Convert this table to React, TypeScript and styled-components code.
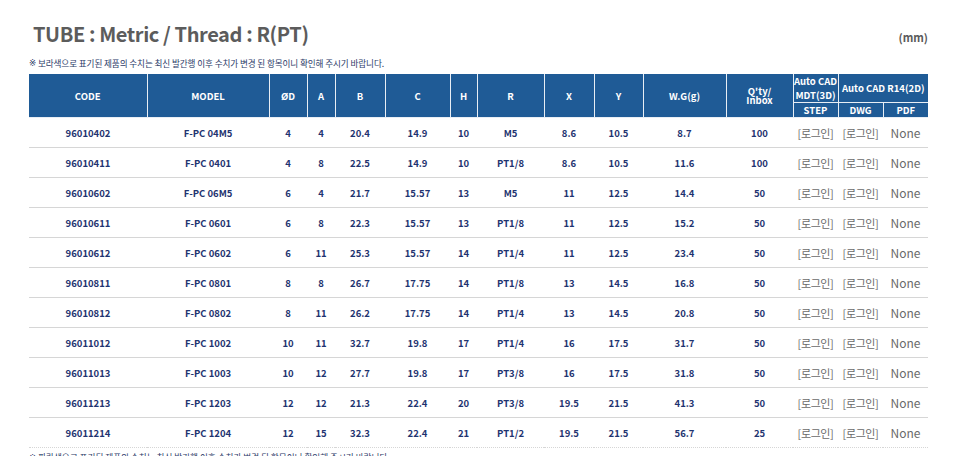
import React from 'react';
import styled, { createGlobalStyle } from 'styled-components';

const GlobalStyle = createGlobalStyle`
  html, body {
    margin: 0;
    padding: 0;
    background: #ffffff;
    font-family: 'Noto Sans CJK KR', 'Noto Sans', sans-serif;
  }
`;

interface Row {
  code: string;
  model: string;
  d: number;
  a: number;
  b: string;
  c: string;
  h: number;
  r: string;
  x: string;
  y: string;
  wg: string;
  qty: number;
}

const rows: Row[] = [
  { code: '96010402', model: 'F-PC 04M5', d: 4, a: 4, b: '20.4', c: '14.9', h: 10, r: 'M5', x: '8.6', y: '10.5', wg: '8.7', qty: 100 },
  { code: '96010411', model: 'F-PC 0401', d: 4, a: 8, b: '22.5', c: '14.9', h: 10, r: 'PT1/8', x: '8.6', y: '10.5', wg: '11.6', qty: 100 },
  { code: '96010602', model: 'F-PC 06M5', d: 6, a: 4, b: '21.7', c: '15.57', h: 13, r: 'M5', x: '11', y: '12.5', wg: '14.4', qty: 50 },
  { code: '96010611', model: 'F-PC 0601', d: 6, a: 8, b: '22.3', c: '15.57', h: 13, r: 'PT1/8', x: '11', y: '12.5', wg: '15.2', qty: 50 },
  { code: '96010612', model: 'F-PC 0602', d: 6, a: 11, b: '25.3', c: '15.57', h: 14, r: 'PT1/4', x: '11', y: '12.5', wg: '23.4', qty: 50 },
  { code: '96010811', model: 'F-PC 0801', d: 8, a: 8, b: '26.7', c: '17.75', h: 14, r: 'PT1/8', x: '13', y: '14.5', wg: '16.8', qty: 50 },
  { code: '96010812', model: 'F-PC 0802', d: 8, a: 11, b: '26.2', c: '17.75', h: 14, r: 'PT1/4', x: '13', y: '14.5', wg: '20.8', qty: 50 },
  { code: '96011012', model: 'F-PC 1002', d: 10, a: 11, b: '32.7', c: '19.8', h: 17, r: 'PT1/4', x: '16', y: '17.5', wg: '31.7', qty: 50 },
  { code: '96011013', model: 'F-PC 1003', d: 10, a: 12, b: '27.7', c: '19.8', h: 17, r: 'PT3/8', x: '16', y: '17.5', wg: '31.8', qty: 50 },
  { code: '96011213', model: 'F-PC 1203', d: 12, a: 12, b: '21.3', c: '22.4', h: 20, r: 'PT3/8', x: '19.5', y: '21.5', wg: '41.3', qty: 50 },
  { code: '96011214', model: 'F-PC 1204', d: 12, a: 15, b: '32.3', c: '22.4', h: 21, r: 'PT1/2', x: '19.5', y: '21.5', wg: '56.7', qty: 25 },
];

// column widths in px, CODE .. PDF
const widths = [118, 122, 38, 28, 50, 65, 27, 67, 50, 49, 83, 67, 45, 45, 45];

const Page = styled.div`
  width: 955px;
  height: 456px;
  overflow: hidden;
  padding: 0 27px 0 29px;
  box-sizing: border-box;
`;

const TitleBar = styled.div`
  display: flex;
  align-items: flex-end;
  justify-content: space-between;
  height: 50px;
`;

const Title = styled.h2`
  margin: 0 0 6px 4px;
  font-size: 20px;
  font-weight: 600;
  color: #5c5c5c;
  line-height: 1;
  letter-spacing: -0.4px;
`;

const Unit = styled.span`
  font-size: 11px;
  font-weight: 700;
  color: #5a5a5a;
  margin-bottom: 5px;
`;

const Note = styled.p`
  margin: 0;
  height: 24px;
  display: flex;
  align-items: center;
  padding-top: 2px;
  box-sizing: border-box;
  font-size: 8.6px;
  color: #2b3a68;
  letter-spacing: -0.1px;
  white-space: pre;
`;

const Mark = styled.span`
  font-family: 'DejaVu Sans', sans-serif;
  color: #2b3a68;
`;

const Table = styled.table`
  width: 899px;
  table-layout: fixed;
  border-collapse: collapse;
`;

const Th = styled.th<{ $h?: number; $lh?: number }>`
  background: #1f5b96;
  color: #ffffff;
  font-size: 9.5px;
  font-weight: 700;
  line-height: ${(p) => p.$lh ?? 10}px;
  border: 1px solid #e8eef5;
  border-top: none;
  padding: 0;
  height: ${(p) => p.$h ?? 14}px;
  white-space: nowrap;
  &:first-child { border-left: none; }
  &:last-child { border-right: none; }
`;

const Tr = styled.tr<{ $last?: boolean }>`
  border-bottom: 1px ${(p) => (p.$last ? 'dotted' : 'solid')} #d6d6d6;
`;

const Td = styled.td`
  height: 29px;
  padding: 0;
  text-align: center;
  font-size: 9.5px;
  font-weight: 700;
  color: #1f3470;
`;

const LinkCell = styled.td<{ $wide?: boolean }>`
  padding: 0;
  text-align: center;
  font-size: ${(p) => (p.$wide ? 12 : 11)}px;
  letter-spacing: ${(p) => (p.$wide ? 0 : -0.4)}px;
  color: #6a6a6a;
  white-space: nowrap;
`;

const Footnote = styled.p`
  margin: 3px 0 0;
  font-size: 8.6px;
  color: #2b3a68;
  white-space: pre;
`;

export default function App() {
  return (
    <Page>
      <GlobalStyle />
      <TitleBar>
        <Title>TUBE : Metric / Thread : R(PT)</Title>
        <Unit>(mm)</Unit>
      </TitleBar>
      <Note>
        <Mark>※</Mark> 보라색으로 표기된 제품의 수치는 최신 발간행 이후 수치가 변경 된 항목이니 확인해 주시기 바랍니다.
      </Note>
      <Table>
        <colgroup>
          {widths.map((w, i) => (
            <col key={i} style={{ width: w }} />
          ))}
        </colgroup>
        <thead>
          <tr>
            <Th rowSpan={2}>CODE</Th>
            <Th rowSpan={2}>MODEL</Th>
            <Th rowSpan={2}>ØD</Th>
            <Th rowSpan={2}>A</Th>
            <Th rowSpan={2}>B</Th>
            <Th rowSpan={2}>C</Th>
            <Th rowSpan={2}>H</Th>
            <Th rowSpan={2}>R</Th>
            <Th rowSpan={2}>X</Th>
            <Th rowSpan={2}>Y</Th>
            <Th rowSpan={2}>W.G(g)</Th>
            <Th rowSpan={2} $lh={9}>
              Q'ty/
              <br />
              Inbox
            </Th>
            <Th $h={28} $lh={14}>
              Auto CAD
              <br />
              MDT(3D)
            </Th>
            <Th colSpan={2} $h={28}>
              Auto CAD R14(2D)
            </Th>
          </tr>
          <tr>
            <Th>STEP</Th>
            <Th>DWG</Th>
            <Th>PDF</Th>
          </tr>
        </thead>
        <tbody>
          {rows.map((r, i) => (
            <Tr key={r.code} $last={i === rows.length - 1}>
              <Td>{r.code}</Td>
              <Td>{r.model}</Td>
              <Td>{r.d}</Td>
              <Td>{r.a}</Td>
              <Td>{r.b}</Td>
              <Td>{r.c}</Td>
              <Td>{r.h}</Td>
              <Td>{r.r}</Td>
              <Td>{r.x}</Td>
              <Td>{r.y}</Td>
              <Td>{r.wg}</Td>
              <Td>{r.qty}</Td>
              <LinkCell>[로그인]</LinkCell>
              <LinkCell>[로그인]</LinkCell>
              <LinkCell $wide>None</LinkCell>
            </Tr>
          ))}
        </tbody>
      </Table>
      <Footnote>
        <Mark>※</Mark> 파란색으로 표기된 제품의 수치는 최신 발간행 이후 수치가 변경 된 항목이니 확인해 주시기 바랍니다.
      </Footnote>
    </Page>
  );
}
